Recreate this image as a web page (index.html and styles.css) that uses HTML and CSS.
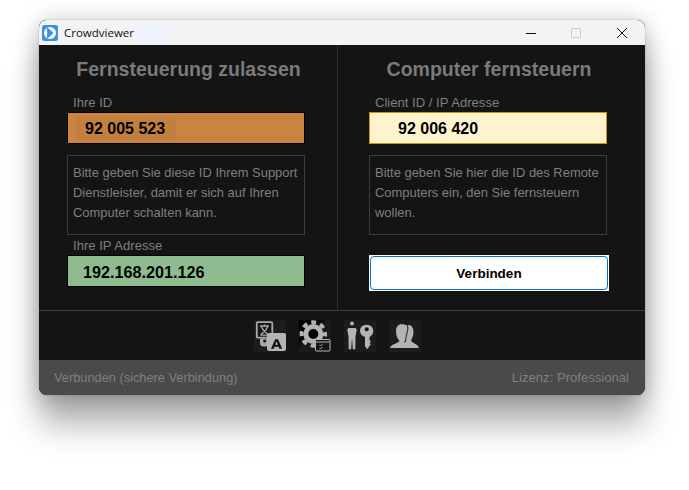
FILE: index.html
```html
<!DOCTYPE html>
<html lang="de">
<head>
<meta charset="utf-8">
<title>Crowdviewer</title>
<link rel="stylesheet" href="styles.css">
</head>
<body>
<div class="window">
  <header class="titlebar">
    <svg class="app-icon" width="16" height="16" viewBox="0 0 16 16">
      <rect width="16" height="16" rx="2.5" fill="#3f8ee8"/>
      <circle cx="8" cy="8" r="6" fill="#fff"/>
      <path d="M5.5 3.5 L10.5 8 L5.5 12.5 L6 8 Z" fill="#3f8ee8" stroke="#3f8ee8" stroke-width="1.4" stroke-linejoin="round"/>
    </svg>
    <span class="app-name">Crowdviewer</span>
    <span class="title-patch"></span>
    <div class="controls">
      <svg width="10" height="10" viewBox="0 0 10 10"><path d="M0 5.5H10" stroke="#111" stroke-width="1"/></svg>
      <svg width="10" height="10" viewBox="0 0 10 10"><rect x=".5" y=".5" width="9" height="9" rx="1" fill="none" stroke="#c9c9c9"/></svg>
      <svg class="close" width="10" height="10" viewBox="0 0 10 10"><path d="M0 0L10 10M10 0L0 10" stroke="#111" stroke-width="1"/></svg>
    </div>
  </header>
  <main class="panels">
    <section class="panel panel-left">
      <h2 class="heading">Fernsteuerung zulassen</h2>
      <div class="label">Ihre ID</div>
      <div class="field field-id"><span class="id-mark">92 005 523</span></div>
      <p class="note">Bitte geben Sie diese ID Ihrem Support Dienstleister, damit er sich auf Ihren Computer schalten kann.</p>
      <div class="label label-ip">Ihre IP Adresse</div>
      <div class="field field-ip">192.168.201.126</div>
    </section>
    <section class="panel panel-right">
      <h2 class="heading">Computer fernsteuern</h2>
      <div class="label">Client ID / IP Adresse</div>
      <div class="field field-client">92 006 420</div>
      <p class="note">Bitte geben Sie hier die ID des Remote Computers ein, den Sie fernsteuern wollen.</p>
      <button class="connect" type="button"><span>Verbinden</span></button>
    </section>
  </main>
  <nav class="toolbar">
    <span class="tool">
      <svg width="32" height="32" viewBox="0 0 32 32">
        <rect x="2.800" y="2.200" width="15.500" height="15.500" rx="1" fill="#161616" stroke="#a8a8a8" stroke-width="1.800"/>
        <path d="M6 6H15M10.500 4.500V6M13.500 6.500C12.500 10 10 12.500 6.500 14.500M7.500 6.500C8.500 10 11 12.500 14.500 14.500M6.500 15.200H14.500" fill="none" stroke="#a8a8a8" stroke-width="1.300"/>
        <path d="M6 18.500H14V26.500H9.500Q6 26.500 6 23Z" fill="#a8a8a8"/>
        <circle cx="10.700" cy="21" r="1.600" fill="#111"/>
        <rect x="13" y="13" width="19" height="18" rx="2" fill="#b4b4b4"/>
        <path d="M17 28.700L21.200 19.300H24L28.200 28.700H25.400L24.700 26.800H20.500L19.800 28.700ZM21.200 24.800H24L22.600 21.300Z" fill="#111" fill-rule="evenodd"/>
      </svg>
    </span>
    <span class="tool tool-gear">
      <svg width="32" height="32" viewBox="0 0 32 32">
        <circle cx="14.300" cy="14" r="10" fill="#b4b4b4"/>
        <circle cx="14.300" cy="14" r="11.700" fill="none" stroke="#b4b4b4" stroke-width="4" stroke-dasharray="4.900 4.290" stroke-dashoffset="2.400"/>
        <circle cx="14.300" cy="14" r="5" fill="#000"/>
        <rect x="16.500" y="19.500" width="14.500" height="11.500" rx="1" fill="#161616" stroke="#b4b4b4"/>
        <path d="M17 22H30.500" stroke="#b4b4b4"/>
        <path d="M20.500 25L21.500 26L23.500 24M20.500 28L21.500 29L23.500 27" fill="none" stroke="#b4b4b4" stroke-width=".9"/>
      </svg>
    </span>
    <span class="tool">
      <svg width="32" height="32" viewBox="0 0 32 32">
        <circle cx="8" cy="3.500" r="2" fill="#b4b4b4"/>
        <path d="M4.500 8H11.500L12.800 9.500L11.500 16.500L11.300 29.300H8.800L8.200 20H7.800L7.200 29.300H4.700L4.500 16.500L3.200 9.500Z" fill="#b4b4b4"/>
        <path d="M22.700 4.700C26.500 4.700 29.300 7.500 29.300 11C29.300 13.800 27.500 16.200 25.500 17V20L27 21.500L25.500 23L26.800 24.300L25.500 26L23.300 29.300L21 26.500V17C18 16.200 16 13.800 16 11C16 7.500 18.900 4.700 22.700 4.700Z" fill="#b4b4b4"/>
        <circle cx="22.700" cy="9.300" r="2" fill="#111"/>
      </svg>
    </span>
    <span class="tool">
      <svg width="32" height="32" viewBox="0 0 32 32">
        <path d="M1 28C2 24 8 24 10.500 21C8 18 7 15 7 11C7 6 10 4.300 13 4.300C15 4.300 16.500 5 17.500 5.300C19 4.500 24.500 4 24.500 12C24.500 16 23 18 22 20.500C24 23.500 29 24 30 28Z" fill="#b4b4b4"/>
        <path d="M18.500 5C20 10 17 14 17 18C17 20 16.500 21.500 15.500 22.500" fill="none" stroke="#333" stroke-width="1.200"/>
      </svg>
    </span>
  </nav>
  <footer class="status">
    <span class="status-left">Verbunden (sichere Verbindung)</span>
    <span>Lizenz: Professional</span>
  </footer>
</div>
</body>
</html>
```

FILE: styles.css
```css
* { box-sizing: border-box; }
html, body { margin: 0; height: 100%; }
body {
  background: #fff;
  padding: 20px 44px 0 39px;
  overflow: hidden;
  font-family: "Liberation Sans", Arial, sans-serif;
}
.window {
  width: 606px;
  height: 375px;
  display: flex;
  flex-direction: column;
  border-radius: 8px;
  overflow: hidden;
  background: #141414;
  box-shadow: 0 0 1px rgba(0,0,0,.5), 0 30px 32px rgba(0,0,0,.3), 0 2px 22px rgba(0,0,0,.26);
}
.titlebar {
  height: 25px;
  flex: none;
  display: flex;
  align-items: center;
  background: #f3f3f3;
  padding-left: 3px;
}
.app-icon { flex: none; }
.app-name {
  margin-left: 6px;
  flex: none;
  width: 71px;
  font: 11.5px "Open Sans", "Liberation Sans", sans-serif;
  color: #111;
}
.title-patch {
  width: 34px;
  height: 20px;
  align-self: flex-end;
  background: #eef3fd;
}
.controls {
  margin-left: auto;
  margin-right: 18px;
  display: flex;
  gap: 35px;
  align-items: center;
}
.close { margin-left: 1px; }
.panels {
  height: 266px;
  flex: none;
  display: flex;
  border-bottom: 1px solid #414141;
}
.panel { display: flex; flex-direction: column; }
.panel-left {
  width: 299px;
  padding: 0 32px 0 28px;
  border-right: 1px solid #2e2e2e;
}
.panel-right {
  flex: 1;
  padding: 0 36px 0 31px;
}
.heading {
  margin: 12px 0 0;
  height: 24px;
  line-height: 24px;
  font-size: 19.500px;
  font-weight: 700;
  text-align: center;
  color: #7a7a7a;
}
.panel-left .heading { padding-left: 5px; }
.label {
  margin: 13px 0 0 6px;
  height: 18px;
  line-height: 18px;
  font-size: 13.100px;
  color: #7f7f7f;
}
.label-ip { margin-top: 2px; }
.field {
  height: 32px;
  width: 238px;
  border: 1px solid #000;
  display: flex;
  align-items: center;
  font-size: 16px;
  font-weight: 700;
  color: #000;
}
.field-id { background: #c98540; padding-left: 8px; }
.id-mark {
  display: block;
  width: 100px;
  height: 23px;
  line-height: 23px;
  padding-left: 9px;
  background: #c27f3d;
}
.field-ip {
  background: #8fbc8f;
  padding: 3px 0 0 15px;
  font-size: 16.200px;
}
.field-client {
  background: #fdf3cf;
  border-color: #c8960c;
  padding: 2px 0 0 28px;
}
.note {
  margin: 11px 0 0;
  width: 238px;
  height: 80px;
  padding: 7px 5px 0;
  border: 1px solid #3c3c3c;
  font-size: 12.950px;
  line-height: 20px;
  color: #7f7f7f;
}
.connect {
  width: 240px;
  height: 36px;
  margin-top: 20px;
  padding: 1px;
  border: 0;
  background: #fff;
  font-family: inherit;
  font-size: 13.500px;
  font-weight: 700;
  color: #000;
}
.connect span {
  display: flex;
  align-items: center;
  justify-content: center;
  height: 100%;
  border: 1px solid #0a6fc9;
  border-radius: 4px;
}
.toolbar {
  flex: 1;
  display: flex;
  justify-content: center;
  align-items: flex-start;
  gap: 13px;
  padding: 9px 9px 0 0;
}
.tool {
  display: block;
  width: 32px;
  height: 32px;
  background: #1c1c1c;
}
.tool svg { display: block; }
.tool-gear { background: linear-gradient(135deg, #000 0 30%, #1a1a1a 45%); }
.status {
  height: 35px;
  flex: none;
  display: flex;
  justify-content: space-between;
  align-items: center;
  padding: 0 16px 0 15px;
  background: #4a4a4a;
  font-size: 13.100px;
  color: #7f7f7f;
}
.status-left { font-size: 12.800px; }
```
